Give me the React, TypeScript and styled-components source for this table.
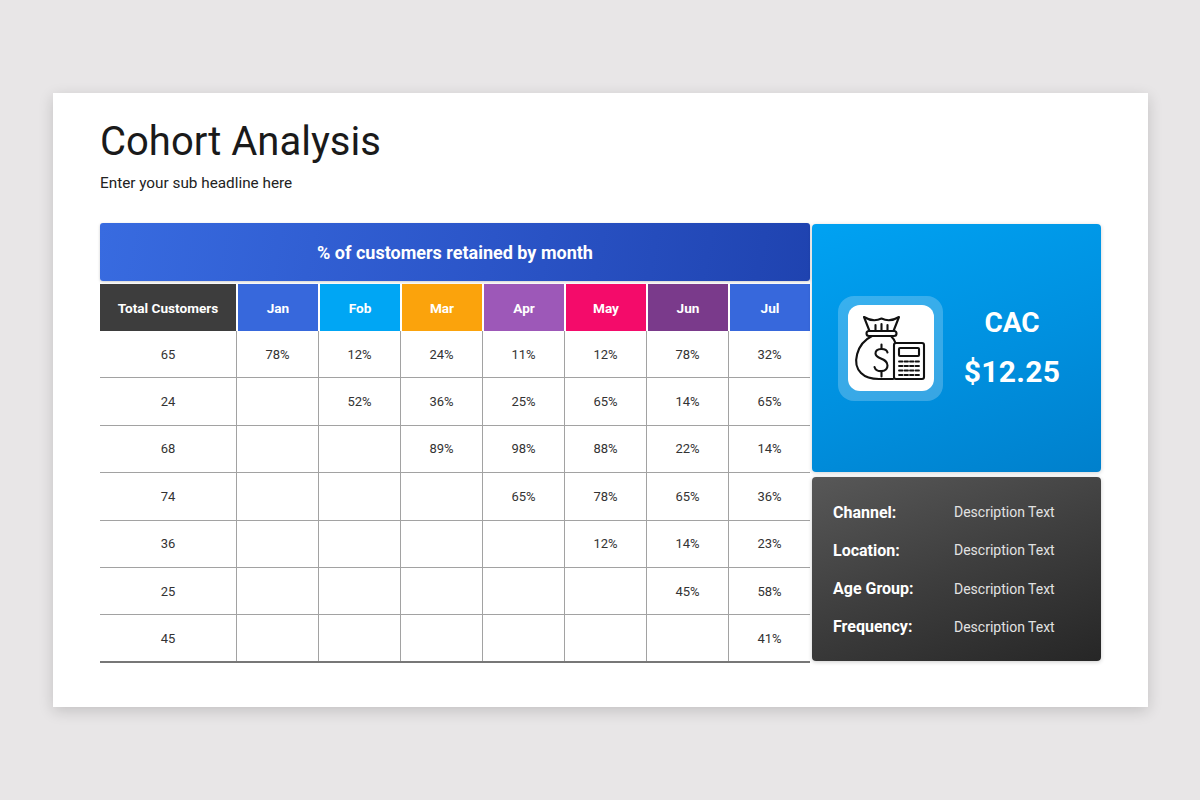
import styled, { createGlobalStyle } from "styled-components";

const GlobalStyle = createGlobalStyle`
  html, body {
    margin: 0;
    padding: 0;
    background: #e8e6e7;
    font-family: Roboto, "Liberation Sans", Arial, sans-serif;
  }
  * { box-sizing: border-box; }
`;

interface IMonth {
  name: string;
  color: string;
}

const months: IMonth[] = [
  { name: "Jan", color: "#3768dc" },
  { name: "Fob", color: "#00a6f4" },
  { name: "Mar", color: "#fba30c" },
  { name: "Apr", color: "#9d58b8" },
  { name: "May", color: "#f40b6a" },
  { name: "Jun", color: "#7a3a8b" },
  { name: "Jul", color: "#3768dc" },
];

const rows: { total: number; values: string[] }[] = [
  { total: 65, values: ["78%", "12%", "24%", "11%", "12%", "78%", "32%"] },
  { total: 24, values: ["", "52%", "36%", "25%", "65%", "14%", "65%"] },
  { total: 68, values: ["", "", "89%", "98%", "88%", "22%", "14%"] },
  { total: 74, values: ["", "", "", "65%", "78%", "65%", "36%"] },
  { total: 36, values: ["", "", "", "", "12%", "14%", "23%"] },
  { total: 25, values: ["", "", "", "", "", "45%", "58%"] },
  { total: 45, values: ["", "", "", "", "", "", "41%"] },
];

const details = [
  { label: "Channel:", value: "Description Text" },
  { label: "Location:", value: "Description Text" },
  { label: "Age Group:", value: "Description Text" },
  { label: "Frequency:", value: "Description Text" },
];

export default function App() {
  return (
    <>
      <GlobalStyle />
      <Page>
        <Card>
          <Title>Cohort Analysis</Title>
          <SubTitle>Enter your sub headline here</SubTitle>
          <Main>
            <Table>
              <TableBanner>% of customers retained by month</TableBanner>
              <HeadRow>
                <HeadCell color="#3d3d3d" first>
                  Total Customers
                </HeadCell>
                {months.map((m) => (
                  <HeadCell key={m.name} color={m.color}>
                    {m.name}
                  </HeadCell>
                ))}
              </HeadRow>
              {rows.map((r, i) => (
                <BodyRow key={i} last={i === rows.length - 1}>
                  <BodyCell first>{r.total}</BodyCell>
                  {r.values.map((v, j) => (
                    <BodyCell key={j}>{v}</BodyCell>
                  ))}
                </BodyRow>
              ))}
            </Table>
            <Side>
              <CacPanel>
                <IconFrame>
                  <IconTile>
                    <BagIcon />
                  </IconTile>
                </IconFrame>
                <CacText>
                  <CacLabel>CAC</CacLabel>
                  <CacValue>$12.25</CacValue>
                </CacText>
              </CacPanel>
              <InfoPanel>
                {details.map((d) => (
                  <InfoRow key={d.label}>
                    <InfoLabel>{d.label}</InfoLabel>
                    <InfoValue>{d.value}</InfoValue>
                  </InfoRow>
                ))}
              </InfoPanel>
            </Side>
          </Main>
        </Card>
      </Page>
    </>
  );
}

function BagIcon() {
  return (
    <svg
      width="85"
      height="85"
      viewBox="0 0 85 85"
      fill="none"
      stroke="#111"
      strokeWidth={2.1}
      strokeLinecap="round"
      strokeLinejoin="round"
    >
      {/* bag top */}
      <path d="M16 11 Q25 16.5 33.5 12.5 Q42 16.5 51 11 L45.5 25 L21.5 25 Z" />
      <path d="M27.5 19 V25 M33.5 18 V25 M39.5 19 V25" />
      <rect x="18.5" y="25" width="30" height="5" rx="2.5" />
      {/* bag body */}
      <path d="M24 30 C 8 38, 4 58, 13 67 C 18 72, 25 73, 31 73 L 45 73" />
      <path d="M43 30 C 45 32, 46.5 34, 47.5 37" />
      {/* dollar */}
      <path d="M39.5 46.5 C 38.5 42, 27.5 41.5, 27.5 47.5 C 27.5 53.5, 39.5 51.5, 39.5 59.5 C 39.5 66.5, 28 67, 26.5 61" />
      <path d="M33.5 38.5 V42 M33.5 66.5 V70.5" />
      {/* calculator */}
      <rect x="46" y="37" width="30" height="36" rx="2" />
      <rect x="51" y="42" width="20" height="8" rx="1" />
      {[55.5, 60, 64.5, 69].map((y) =>
        [51, 56.5, 62, 67.5].map((x) => (
          <path key={`${x}-${y}`} d={`M${x} ${y} H${x + 3.5}`} strokeWidth={1.8} />
        ))
      )}
    </svg>
  );
}

const Page = styled.div`
  width: 1200px;
  height: 800px;
  padding: 93px 52px 0 53px;
`;

const Card = styled.div`
  width: 1095px;
  height: 614px;
  background: #fff;
  box-shadow: 0 4px 14px rgba(0, 0, 0, 0.16);
  padding: 25px 47px 0 47px;
  display: flex;
  flex-direction: column;
`;

const Title = styled.h1`
  margin: 0;
  font-size: 40px;
  line-height: 48px;
  font-weight: 400;
  color: #1a1a1a;
`;

const SubTitle = styled.div`
  margin-top: 7px;
  font-size: 15.3px;
  line-height: 20px;
  color: #222;
`;

const Main = styled.div`
  margin-top: 30px;
  display: flex;
  gap: 2px;
`;

const Table = styled.div`
  width: 710px;
  display: flex;
  flex-direction: column;
`;

const TableBanner = styled.div`
  height: 58px;
  border-radius: 3px;
  background: linear-gradient(100deg, #386be0 0%, #2b55c8 55%, #1f43b0 100%);
  box-shadow: 0 1px 3px rgba(0, 0, 0, 0.2);
  color: #fff;
  font-size: 18px;
  font-weight: 700;
  display: flex;
  align-items: center;
  justify-content: center;
`;

const HeadRow = styled.div`
  margin-top: 3px;
  display: grid;
  grid-template-columns: 136px repeat(7, 1fr);
  height: 47px;
`;

const HeadCell = styled.div<{ color: string; first?: boolean }>`
  background: ${(p) => p.color};
  border-left: ${(p) => (p.first ? "none" : "2px solid #fff")};
  color: #fff;
  font-size: 13.6px;
  font-weight: 700;
  display: flex;
  align-items: center;
  justify-content: center;
`;

const BodyRow = styled.div<{ last?: boolean }>`
  display: grid;
  grid-template-columns: 136px repeat(7, 1fr);
  height: 47.4px;
  border-bottom: ${(p) => (p.last ? "2px solid #777" : "1.5px solid #a2a2a2")};
`;

const BodyCell = styled.div<{ first?: boolean }>`
  border-left: ${(p) => (p.first ? "none" : "1.5px solid #a2a2a2")};
  color: #333;
  font-size: 13px;
  display: flex;
  align-items: center;
  justify-content: center;
`;

const Side = styled.div`
  width: 289px;
  display: flex;
  flex-direction: column;
  gap: 5px;
  padding-top: 1px;
`;

const CacPanel = styled.div`
  height: 248px;
  border-radius: 4px;
  background: linear-gradient(160deg, #00a2f2 0%, #0090df 55%, #0080cc 100%);
  box-shadow: 0 1px 4px rgba(0, 0, 0, 0.18);
  display: flex;
  align-items: center;
  padding-left: 26px;
`;

const IconFrame = styled.div`
  width: 105px;
  height: 105px;
  border-radius: 16px;
  background: rgba(255, 255, 255, 0.22);
  display: flex;
  align-items: center;
  justify-content: center;
`;

const IconTile = styled.div`
  width: 86px;
  height: 86px;
  border-radius: 12px;
  background: #fff;
  display: flex;
  align-items: center;
  justify-content: center;
`;

const CacText = styled.div`
  flex: 1;
  display: flex;
  flex-direction: column;
  align-items: center;
  color: #fff;
  font-weight: 700;
  padding-right: 20px;
`;

const CacLabel = styled.div`
  font-size: 28px;
  line-height: 34px;
`;

const CacValue = styled.div`
  margin-top: 14px;
  font-size: 30px;
  line-height: 36px;
  letter-spacing: 0.3px;
`;

const InfoPanel = styled.div`
  height: 184px;
  border-radius: 4px;
  background: linear-gradient(160deg, #585858 0%, #3e3e3e 50%, #262626 100%);
  box-shadow: 0 1px 4px rgba(0, 0, 0, 0.2);
  padding: 16px 21px 15px 21px;
  display: flex;
  flex-direction: column;
`;

const InfoRow = styled.div`
  height: 38.3px;
  display: flex;
  align-items: center;
`;

const InfoLabel = styled.div`
  width: 121px;
  color: #fff;
  font-size: 16px;
  font-weight: 700;
`;

const InfoValue = styled.div`
  color: #e2e2e2;
  font-size: 14px;
`;
